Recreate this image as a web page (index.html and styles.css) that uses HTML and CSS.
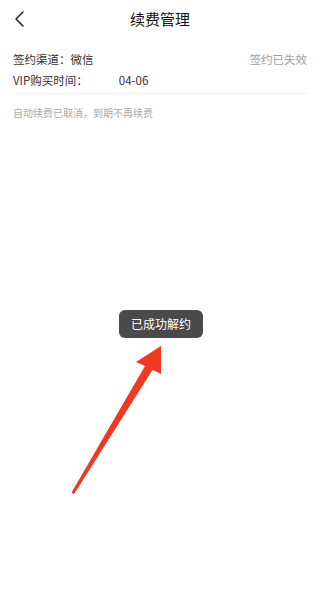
FILE: index.html
```html
<!DOCTYPE html>
<html lang="zh">
<head>
<meta charset="utf-8">
<link rel="stylesheet" href="styles.css">
</head>
<body>
<div class="page">
  <header class="topbar">
    <svg class="back" width="12" height="18" viewBox="0 0 12 18"><polyline points="9,2 2,9 9,16" fill="none" stroke="#222" stroke-width="1.5" stroke-linecap="round" stroke-linejoin="round"/></svg>
    <h1 class="title">续费管理</h1>
  </header>
  <section class="info">
    <div class="row">
      <span>签约渠道：微信</span>
      <span class="status">签约已失效</span>
    </div>
    <div class="row">
      <span>VIP购买时间：<span class="date">04-06</span></span>
    </div>
  </section>
  <p class="hint">自动续费已取消，到期不再续费</p>
  <div class="toast">已成功解约</div>
  <svg class="arrow" width="320" height="611" viewBox="0 0 320 611">
    <polygon points="161,346 136,362 145,366 71.7,492.2 73,494 74.5,493.6 152.5,370 161,374" fill="#ee3a22"/>
  </svg>
</div>
</body>
</html>
```

FILE: styles.css
```css
html, body {
  margin: 0;
  padding: 0;
  background: #fff;
}
body {
  font-family: "Noto Sans CJK SC", "Noto Sans", sans-serif;
  color: #333;
}
.page {
  position: relative;
  width: 320px;
  height: 611px;
  overflow: hidden;
}
.topbar {
  height: 38px;
  display: flex;
  align-items: center;
  justify-content: center;
  position: relative;
}
.back {
  position: absolute;
  left: 14px;
  top: 10px;
}
.title {
  margin: 0;
  font-size: 15px;
  font-weight: 400;
  color: #111;
  line-height: 38px;
}
.info {
  margin: 0 13px;
  padding-top: 11px;
  padding-bottom: 2px;
  border-bottom: 1px solid #f0f0f0;
}
.row {
  display: flex;
  justify-content: space-between;
  font-size: 11.5px;
  line-height: 21px;
  color: #333;
}
.status {
  color: #a0a0a0;
}
.date {
  margin-left: 31px;
}
.hint {
  margin: 12px 13px 0;
  font-size: 10px;
  line-height: 14px;
  color: #aaa;
}
.toast {
  position: absolute;
  left: 119px;
  top: 310px;
  width: 84px;
  height: 28px;
  border-radius: 6px;
  background: #4a4a4a;
  color: #fff;
  font-size: 12px;
  line-height: 28px;
  text-align: center;
}
.arrow {
  position: absolute;
  left: 0;
  top: 0;
  pointer-events: none;
}
```
